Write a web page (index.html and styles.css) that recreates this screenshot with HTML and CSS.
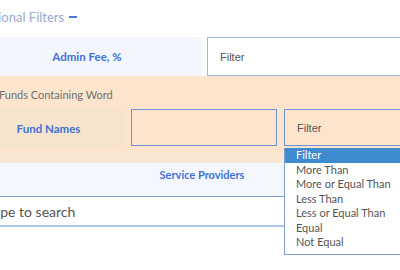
FILE: index.html
```html
<!DOCTYPE html>
<html>
<head>
<meta charset="utf-8">
<link rel="stylesheet" href="styles.css">
</head>
<body>
<div class="page">
  <div class="title">Additional Filters <span class="minus"></span></div>

  <div class="row2">
    <div class="label-cell blue">Admin Fee, %</div>
    <div class="input light">Filter</div>
  </div>

  <div class="peach">
    <div class="sub">Funds Containing Word</div>
    <div class="row3">
      <div class="label-cell tan">Fund Names</div>
      <div class="input dark"></div>
      <div class="select-wrap">
        <div class="input dark sel">Filter</div>
        <ul class="dropdown">
          <li class="active">Filter</li>
          <li>More Than</li>
          <li>More or Equal Than</li>
          <li>Less Than</li>
          <li>Less or Equal Than</li>
          <li>Equal</li>
          <li>Not Equal</li>
        </ul>
      </div>
    </div>
  </div>
  <div class="strip"></div>

  <div class="service">Service Providers</div>
  <div class="search">Type to search</div>
</div>
</body>
</html>
```

FILE: styles.css
```css
* { box-sizing: border-box; }
html, body { margin: 0; padding: 0; background: #fff; overflow: hidden; }
body { width: 400px; height: 270px; font-family: Lato, "Open Sans", sans-serif; }

.page {
  margin-left: -28px;
  width: 460px;
}

.title {
  margin-left: -5px;
  font-size: 13px;
  line-height: 16px;
  color: #9aa9cf;
  display: flex;
  align-items: center;
  height: 37px;
  padding-top: 9px;
  padding-bottom: 12px;
}
.title .minus {
  display: inline-block;
  width: 8px;
  height: 2px;
  background: #4a7fe0;
  margin-left: 5px;
}

.row2 {
  display: grid;
  grid-template-columns: 230px 1fr;
  column-gap: 5px;
  height: 39px;
}
.label-cell {
  display: flex;
  align-items: center;
  justify-content: center;
  font-weight: 700;
  font-size: 11.5px;
  color: #3f72d6;
}
.label-cell.blue { background: #f3f6fc; }
.label-cell.tan { background: #f6e4cc; }

.input {
  background: #fff;
  font-family: "Liberation Sans", Arial, sans-serif;
  font-size: 11px;
  color: #555;
  display: flex;
  align-items: center;
  padding-left: 12px;
}
.input.light { border: 1px solid #9ab7ea; }
.input.dark { border: 1px solid #6f92d2; background: #fde5cd; }

.peach {
  background: #fde5cd;
  padding-top: 12px;
  height: 77px;
}
.sub {
  font-size: 11px;
  color: #707070;
  line-height: 14px;
  padding-left: 27px;
  margin-bottom: 7px;
}
.row3 {
  display: grid;
  grid-template-columns: 153px 146px 1fr;
  column-gap: 6px;
  height: 38px;
}
.row3 .input.dark { height: 37px; }
.select-wrap { position: relative; margin-left: 1px; }
.select-wrap .sel { height: 38px; }

.dropdown {
  position: absolute;
  left: 0;
  top: 39px;
  width: 100%;
  margin: 0;
  padding: 0 0 4px 0;
  list-style: none;
  background: #fff;
  border: 1px solid #7f9fd6;
  border-top: none;
  z-index: 5;
  font-size: 11px;
  color: #555;
}
.dropdown li {
  height: 14.5px;
  line-height: 14.5px;
  padding-left: 11px;
}
.dropdown li.active {
  background: #3e8bcf;
  color: #fff;
}

.strip {
  height: 10px;
  background: #f7e8d4;
}

.service {
  height: 34px;
  background: #f4f7fd;
  border-bottom: 1px solid #7f9fdc;
  text-align: center;
  font-weight: 700;
  font-size: 11px;
  color: #3f72d6;
  line-height: 23px;
}
.search {
  height: 30px;
  border-bottom: 2px solid #a9c5ef;
  font-size: 14px;
  color: #555;
  display: flex;
  align-items: center;
  padding-left: 14px;
}
```
